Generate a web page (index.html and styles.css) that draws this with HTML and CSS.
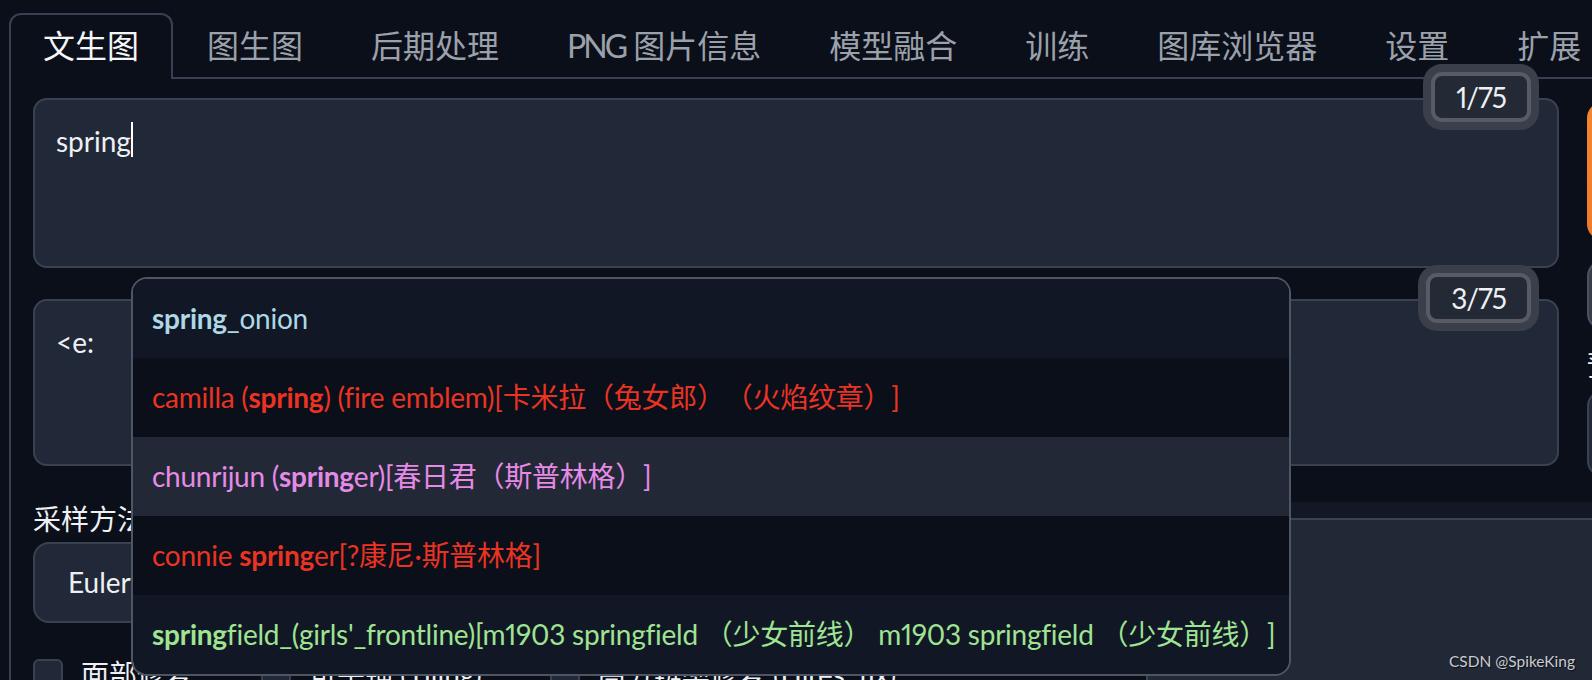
FILE: index.html
```html
<!DOCTYPE html>
<html lang="zh-CN">
<head>
  <meta charset="UTF-8">
  <meta name="viewport" content="width=device-width, initial-scale=1.0">
  <title>Stable Diffusion WebUI</title>
  <link rel="stylesheet" href="styles.css">
</head>
<body>
  <div class="app">
    <nav class="tab-nav">
      <div class="tab active">文生图</div>
      <div class="tab">图生图</div>
      <div class="tab">后期处理</div>
      <div class="tab"><span class="tab-latin">PNG</span> 图片信息</div>
      <div class="tab">模型融合</div>
      <div class="tab">训练</div>
      <div class="tab">图库浏览器</div>
      <div class="tab">设置</div>
      <div class="tab">扩展</div>
    </nav>

    <div class="tab-panel">
      <div class="top-row">
        <div class="prompts">
          <div class="prompt">
            <span class="token-counter">1/75</span>
            <div class="prompt-input">spring<span class="caret"></span></div>
          </div>
          <div class="prompt">
            <span class="token-counter">3/75</span>
            <div class="prompt-input negative">&lt;e:</div>
          </div>
        </div>

        <div class="actions">
          <div class="generate-btn"></div>
          <div class="tool-btn"></div>
          <div class="styles-label">预设样式</div>
          <div class="styles-box"></div>
        </div>
      </div>

      <div class="settings-row">
        <div class="settings">
          <div class="field-label">采样方法 (Sampler)</div>
          <div class="select-box">Euler a</div>
          <div class="checks">
            <div class="check"><span class="check-box"></span>面部修复</div>
            <div class="check"><span class="check-box"></span>可平铺 (Tiling)</div>
            <div class="check"><span class="check-box"></span>高分辨率修复 (Hires. fix)</div>
          </div>
        </div>
        <div class="output">
          <div class="output-head"></div>
          <div class="output-body"></div>
        </div>
      </div>
    </div>
  </div>

  <ul class="autocomplete">
    <li class="tag general"><b>spring</b>_onion</li>
    <li class="tag red">camilla (<b>spring</b>) (fire emblem)[卡米拉（兔女郎）（火焰纹章）]</li>
    <li class="tag copyright selected">chunrijun (<b>spring</b>er)[春日君（斯普林格）]</li>
    <li class="tag red">connie <b>spring</b>er[?康尼·斯普林格]</li>
    <li class="tag character"><b>spring</b>field_(girls'_frontline)[m1903 springfield （少女前线） m1903 springfield （少女前线）]</li>
  </ul>

  <div class="watermark">CSDN @SpikeKing</div>
</body>
</html>
```

FILE: styles.css
```css
:root {
  --bg-color: #0b0f19;
  --input-color: #212838;
  --border-color: #374151;
  --text-color: #eef0f3;
  --muted-color: #9ba1ab;
}

html {
  overflow: hidden;
}

body {
  margin: 0;
  width: 1592px;
  height: 680px;
  position: relative;
  overflow: hidden;
  background-color: var(--bg-color);
  color: var(--text-color);
  font-family: Lato, "Noto Sans CJK SC", sans-serif;
  font-variant-numeric: proportional-nums;
  text-spacing-trim: space-all;
}

.app {
  width: 2400px;
  padding: 13px 0 0 9px;
}

.tab-nav {
  display: flex;
  border-bottom: 2px solid var(--border-color);
}

.tab {
  padding: 0 32px;
  border: 2px solid transparent;
  border-bottom: 0;
  font-size: 32px;
  line-height: 62px;
  color: var(--muted-color);
  white-space: nowrap;
}

.tab-latin {
  letter-spacing: -3px;
}

.tab.active {
  position: relative;
  padding-bottom: 2px;
  margin-bottom: -2px;
  border-color: var(--border-color);
  border-radius: 12px 12px 0 0;
  background-color: var(--bg-color);
  color: #f5f6f8;
}

.tab-panel {
  height: 620px;
  padding: 19px 0 0 22px;
  border-left: 2px solid var(--border-color);
}

.top-row {
  display: flex;
  gap: 28px;
}

.prompts {
  width: 1526px;
  display: flex;
  flex-direction: column;
  gap: 31px;
}

.prompt {
  position: relative;
}

.prompt-input {
  box-sizing: border-box;
  height: 170px;
  padding: 20px 21px;
  background-color: var(--input-color);
  border: 2px solid #3a4251;
  border-radius: 14px;
  font-size: 28px;
  line-height: 42px;
}

.prompt-input.negative {
  height: 167px;
}

.caret {
  display: inline-block;
  width: 2px;
  height: 35px;
  background-color: #fff;
  vertical-align: -5px;
}

.token-counter {
  position: absolute;
  top: -26px;
  right: 28px;
  z-index: 2;
  padding: 3px 21px;
  font-size: 28px;
  line-height: 36px;
  letter-spacing: -1px;
  background-color: #232935;
  border: 4px solid #565b66;
  border-radius: 11px;
  box-shadow: 0 0 0 8px #3a3f4a;
}

.actions {
  flex: 0 0 400px;
  display: flex;
  flex-direction: column;
  padding-top: 4px;
}

.generate-btn {
  height: 138px;
  border-radius: 16px;
  background: linear-gradient(to bottom right, #f3862f, #e8712a);
}

.tool-btn {
  box-sizing: border-box;
  height: 70px;
  margin-top: 20px;
  border-radius: 16px;
  background-color: #373c47;
  border: 2px solid #4b5160;
}

.styles-label {
  margin-top: 18px;
  font-size: 28px;
  line-height: 34px;
}

.styles-box {
  box-sizing: border-box;
  height: 87px;
  margin-top: 8px;
  border-radius: 16px;
  background-color: var(--input-color);
  border: 2px solid #3a4251;
}

.settings-row {
  display: flex;
  gap: 28px;
  margin-top: 25px;
}

.settings {
  flex: 0 0 1085px;
}

.field-label {
  font-size: 28px;
  line-height: 34px;
}

.select-box {
  box-sizing: border-box;
  height: 81px;
  margin-top: 6px;
  padding-left: 33px;
  background-color: var(--input-color);
  border: 2px solid #3a4251;
  border-radius: 16px;
  font-size: 28px;
  line-height: 77px;
}

.checks {
  display: flex;
  gap: 68px;
  margin-top: 34px;
}

.check {
  display: flex;
  align-items: center;
  gap: 18px;
  font-size: 28px;
  line-height: 34px;
  white-space: nowrap;
}

.check-box {
  box-sizing: border-box;
  width: 30px;
  height: 30px;
  border-radius: 6px;
  background-color: var(--input-color);
  border: 2px solid #3a4251;
}

.output {
  flex: 1;
}

.output-head {
  height: 16px;
  background-color: #121826;
  border-bottom: 2px solid #3c4352;
}

.output-body {
  height: 300px;
  background-color: #212836;
  border-left: 2px solid #3c4352;
}

.autocomplete {
  position: absolute;
  top: 277px;
  left: 131px;
  width: 1160px;
  box-sizing: border-box;
  margin: 0;
  padding: 0;
  list-style: none;
  border: 2px solid #4f5663;
  border-radius: 16px;
  overflow: hidden;
  z-index: 10;
}

.tag {
  height: 79px;
  padding-left: 19px;
  font-size: 28px;
  line-height: 79px;
  letter-spacing: -0.25px;
  white-space: nowrap;
  background-color: #0b0f19;
}

.tag:nth-child(odd) {
  background-color: #121725;
}

.tag.selected {
  background-color: #222836;
}

.tag b {
  font-weight: 700;
}

.general { color: #add8e6; }
.red { color: #ea3323; }
.copyright { color: #e58be6; }
.character { color: #9ee492; }

.watermark {
  position: absolute;
  right: 17px;
  top: 651px;
  z-index: 20;
  font-size: 15.5px;
  line-height: 20px;
  color: #c9ccd2;
  text-shadow: 1px 1px 1px rgba(0, 0, 0, 0.6);
}
```
